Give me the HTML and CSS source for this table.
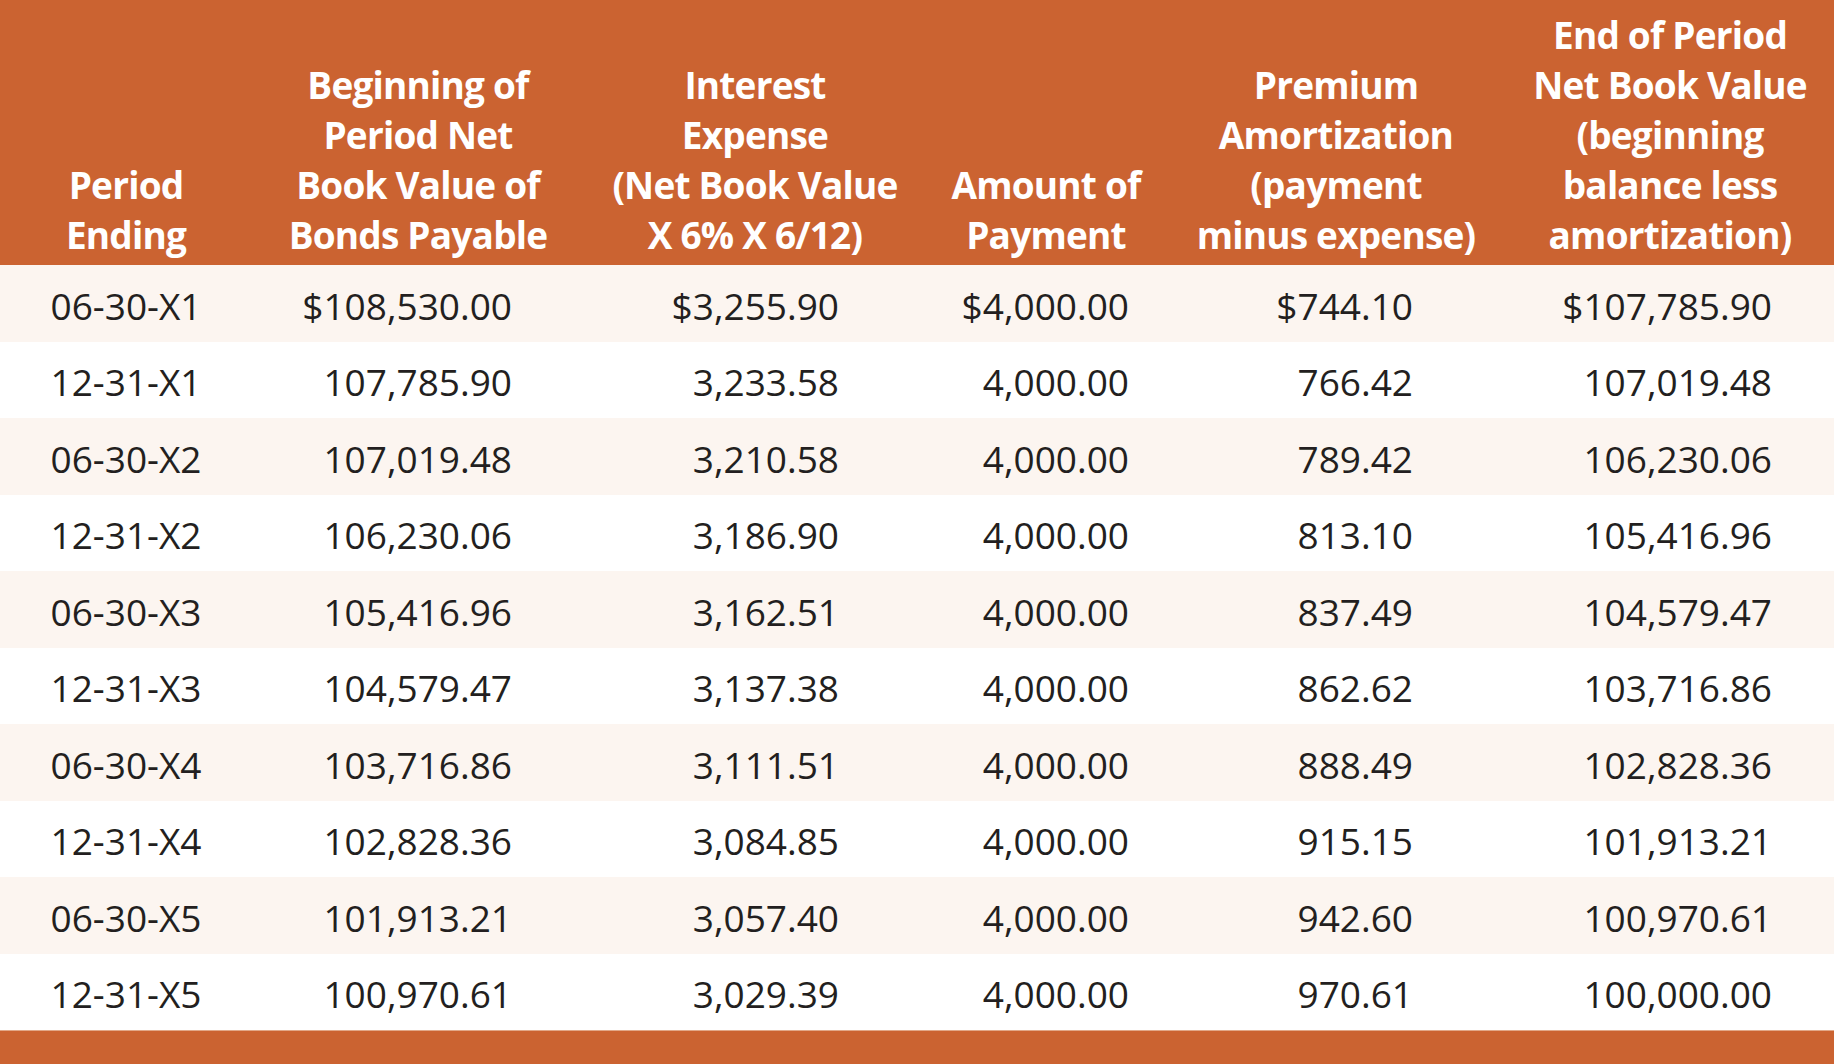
FILE: index.html
```html
<!DOCTYPE html>
<html lang="en">
<head>
<meta charset="utf-8">
<title>Bond Premium Amortization Schedule</title>
<link rel="stylesheet" href="styles.css">
</head>
<body>
<div class="sheet">
<table class="schedule">
  <colgroup>
    <col class="w1"><col class="w2"><col class="w3"><col class="w4"><col class="w5"><col class="w6">
  </colgroup>
  <thead>
    <tr>
      <th>Period<br>Ending</th>
      <th>Beginning of<br>Period Net<br>Book Value of<br>Bonds Payable</th>
      <th>Interest<br>Expense<br>(Net Book Value<br>X 6% X 6/12)</th>
      <th>Amount of<br>Payment</th>
      <th>Premium<br>Amortization<br>(payment<br>minus expense)</th>
      <th>End of Period<br>Net Book Value<br>(beginning<br>balance less<br>amortization)</th>
    </tr>
  </thead>
  <tbody>
    <tr><td class="c1">06-30-X1</td><td class="c2">$108,530.00</td><td class="c3">$3,255.90</td><td class="c4">$4,000.00</td><td class="c5">$744.10</td><td class="c6">$107,785.90</td></tr>
    <tr><td class="c1">12-31-X1</td><td class="c2">107,785.90</td><td class="c3">3,233.58</td><td class="c4">4,000.00</td><td class="c5">766.42</td><td class="c6">107,019.48</td></tr>
    <tr><td class="c1">06-30-X2</td><td class="c2">107,019.48</td><td class="c3">3,210.58</td><td class="c4">4,000.00</td><td class="c5">789.42</td><td class="c6">106,230.06</td></tr>
    <tr><td class="c1">12-31-X2</td><td class="c2">106,230.06</td><td class="c3">3,186.90</td><td class="c4">4,000.00</td><td class="c5">813.10</td><td class="c6">105,416.96</td></tr>
    <tr><td class="c1">06-30-X3</td><td class="c2">105,416.96</td><td class="c3">3,162.51</td><td class="c4">4,000.00</td><td class="c5">837.49</td><td class="c6">104,579.47</td></tr>
    <tr><td class="c1">12-31-X3</td><td class="c2">104,579.47</td><td class="c3">3,137.38</td><td class="c4">4,000.00</td><td class="c5">862.62</td><td class="c6">103,716.86</td></tr>
    <tr><td class="c1">06-30-X4</td><td class="c2">103,716.86</td><td class="c3">3,111.51</td><td class="c4">4,000.00</td><td class="c5">888.49</td><td class="c6">102,828.36</td></tr>
    <tr><td class="c1">12-31-X4</td><td class="c2">102,828.36</td><td class="c3">3,084.85</td><td class="c4">4,000.00</td><td class="c5">915.15</td><td class="c6">101,913.21</td></tr>
    <tr><td class="c1">06-30-X5</td><td class="c2">101,913.21</td><td class="c3">3,057.40</td><td class="c4">4,000.00</td><td class="c5">942.60</td><td class="c6">100,970.61</td></tr>
    <tr><td class="c1">12-31-X5</td><td class="c2">100,970.61</td><td class="c3">3,029.39</td><td class="c4">4,000.00</td><td class="c5">970.61</td><td class="c6">100,000.00</td></tr>
  </tbody>
</table>
<div class="footer-bar"></div>
</div>
</body>
</html>
```
FILE: styles.css
```css
html, body {
  margin: 0;
  padding: 0;
  background: #ffffff;
}

.sheet {
  width: 1834px;
  height: 1064px;
  display: flex;
  flex-direction: column;
  font-family: "Open Sans", "Noto Sans", sans-serif;
  color: #231f20;
}

.schedule {
  width: 1834px;
  border-collapse: collapse;
  table-layout: fixed;
}

.w1 { width: 252px; }
.w2 { width: 332px; }
.w3 { width: 342px; }
.w4 { width: 240px; }
.w5 { width: 340px; }
.w6 { width: 328px; }

.schedule thead th {
  background: #cb6331;
  color: #ffffff;
  font-weight: 700;
  font-size: 37px;
  line-height: 50px;
  letter-spacing: -0.8px;
  text-align: center;
  vertical-align: bottom;
  padding: 10px 0 5px;
  height: 250px;
  white-space: nowrap;
}

.schedule tbody tr {
  height: 76.5px;
}

.schedule tbody td {
  padding: 5px 0 0;
  font-size: 37px;
  line-height: 40px;
  vertical-align: middle;
  text-align: right;
  white-space: nowrap;
}

.schedule tbody tr:nth-child(odd) td {
  background: #fcf5f0;
}

.schedule tbody tr:nth-child(even) td {
  background: #ffffff;
}

.schedule tbody td.c1 { text-align: center; }
.schedule tbody td.c2 { padding-right: 72px; }
.schedule tbody td.c3 { padding-right: 87px; }
.schedule tbody td.c4 { padding-right: 37px; }
.schedule tbody td.c5 { padding-right: 93px; }
.schedule tbody td.c6 { padding-right: 62px; }

.footer-bar {
  flex: 1;
  background: #cb6331;
  border-top: 1px solid #e2a888;
}
```
